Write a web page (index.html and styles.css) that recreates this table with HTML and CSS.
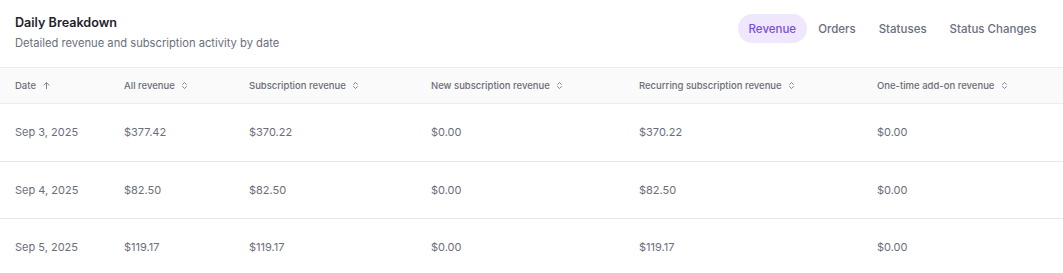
FILE: index.html
```html
<!DOCTYPE html>
<html lang="en">
<head>
    <meta charset="UTF-8">
    <title>Daily Breakdown</title>
    <link rel="stylesheet" href="styles.css">
</head>
<body>
    <div class="card">
        <!-- Card header -->
        <div class="card-head">
            <div>
                <h2 class="title">Daily Breakdown</h2>
                <p class="subtitle">Detailed revenue and subscription activity by date</p>
            </div>
            <div class="tabs">
                <button class="tab active">Revenue</button>
                <button class="tab">Orders</button>
                <button class="tab">Statuses</button>
                <button class="tab">Status Changes</button>
            </div>
        </div>

        <!-- Table -->
        <table class="breakdown">
            <thead>
                <tr>
                    <th class="col-date">Date <svg class="sort" viewBox="0 0 10 10"><path d="M5 8.5V2M2.2 4.6L5 1.8l2.8 2.8"/></svg></th>
                    <th class="col-all">All revenue <svg class="sort" viewBox="0 0 10 10"><path d="M2.8 3.8L5 1.6l2.2 2.2M2.8 6.2L5 8.4l2.2-2.2"/></svg></th>
                    <th class="col-sub">Subscription revenue <svg class="sort" viewBox="0 0 10 10"><path d="M2.8 3.8L5 1.6l2.2 2.2M2.8 6.2L5 8.4l2.2-2.2"/></svg></th>
                    <th class="col-new">New subscription revenue <svg class="sort" viewBox="0 0 10 10"><path d="M2.8 3.8L5 1.6l2.2 2.2M2.8 6.2L5 8.4l2.2-2.2"/></svg></th>
                    <th class="col-rec">Recurring subscription revenue <svg class="sort" viewBox="0 0 10 10"><path d="M2.8 3.8L5 1.6l2.2 2.2M2.8 6.2L5 8.4l2.2-2.2"/></svg></th>
                    <th>One-time add-on revenue <svg class="sort" viewBox="0 0 10 10"><path d="M2.8 3.8L5 1.6l2.2 2.2M2.8 6.2L5 8.4l2.2-2.2"/></svg></th>
                </tr>
            </thead>
            <tbody>
                <tr>
                    <td>Sep 3, 2025</td>
                    <td>$377.42</td>
                    <td>$370.22</td>
                    <td>$0.00</td>
                    <td>$370.22</td>
                    <td>$0.00</td>
                </tr>
                <tr>
                    <td>Sep 4, 2025</td>
                    <td>$82.50</td>
                    <td>$82.50</td>
                    <td>$0.00</td>
                    <td>$82.50</td>
                    <td>$0.00</td>
                </tr>
                <tr>
                    <td>Sep 5, 2025</td>
                    <td>$119.17</td>
                    <td>$119.17</td>
                    <td>$0.00</td>
                    <td>$119.17</td>
                    <td>$0.00</td>
                </tr>
            </tbody>
        </table>
    </div>
</body>
</html>
```

FILE: styles.css
```css
body {
    margin: 0;
    font-family: 'Inter', 'Noto Sans', sans-serif;
    background-color: #ffffff;
    color: #111827;
}

/* Card */
.card {
    width: 1063px;
}

.card-head {
    display: flex;
    justify-content: space-between;
    align-items: flex-start;
    padding: 15px 15px 14px 15px;
    height: 38px;
}

.title {
    margin: 0;
    font-size: 12.6px;
    font-weight: 600;
    line-height: 16px;
    color: #1f2230;
}

.subtitle {
    margin: 5px 0 0;
    font-size: 11.2px;
    line-height: 14px;
    color: #6b6f7b;
}

/* Tabs */
.tabs {
    display: flex;
    margin-top: -1px;
}

.tab {
    border: none;
    background: transparent;
    font-family: inherit;
    font-size: 11.5px;
    font-weight: 500;
    color: #6b6e7d;
    padding: 0 11.5px;
    height: 29px;
    border-radius: 15px;
    cursor: pointer;
}

.tab.active {
    background-color: #efe8fd;
    color: #7c4ddb;
    padding: 0 10.5px;
}

/* Table */
.breakdown {
    width: 100%;
    border-collapse: collapse;
    table-layout: fixed;
}

.breakdown th {
    text-align: left;
    font-size: 9.5px;
    font-weight: 500;
    color: #6b6e78;
    background-color: #fafafa;
    height: 35px;
    padding: 0 0 0 15px;
    border-top: 1px solid #ececec;
    border-bottom: 1px solid #ececec;
    white-space: nowrap;
}

.breakdown th.col-date { width: 94px; }
.breakdown th.col-all { width: 110px; }
.breakdown th.col-sub { width: 167px; }
.breakdown th.col-new { width: 193px; }
.breakdown th.col-rec { width: 223px; }

.sort {
    width: 9px;
    height: 9px;
    vertical-align: -1px;
    margin-left: 3px;
    fill: none;
    stroke: #80838c;
    stroke-width: 1.1;
    stroke-linecap: round;
    stroke-linejoin: round;
}

.breakdown td {
    font-size: 11px;
    color: #6b6e78;
    height: 56.5px;
    padding: 0 0 0 15px;
    border-bottom: 1px solid #e8e8e8;
}
```
